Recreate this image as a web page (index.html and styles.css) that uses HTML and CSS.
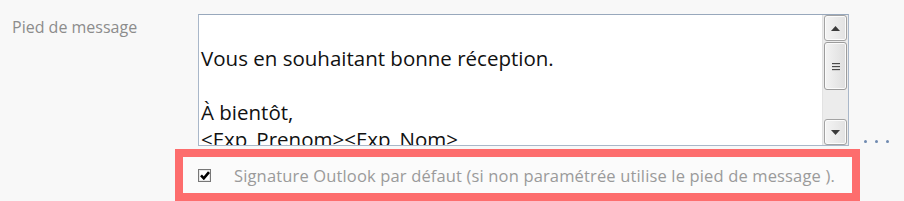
FILE: index.html
```
<!DOCTYPE html>
<html lang="fr">
<head>
    <meta charset="UTF-8">
    <meta name="viewport" content="width=device-width, initial-scale=1.0">
    <title>Pied de message</title>
    <link rel="stylesheet" href="styles.css">
</head>
<body>
    <div class="field-row">
        <div class="field-label">Pied de message</div>

        <div class="editor">
            <div class="editor-content">
                <div class="line">&nbsp;</div>
                <div class="line">Vous en souhaitant bonne réception.</div>
                <div class="line">&nbsp;</div>
                <div class="line">À bientôt,</div>
                <div class="line">&lt;Exp_Prenom&gt;&lt;Exp_Nom&gt;</div>
            </div>
            <div class="scrollbar">
                <div class="scroll-btn">
                    <svg width="9" height="5" viewBox="0 0 9 5"><path d="M4.5 0 L9 5 L0 5 Z" fill="#3a3a3a"/></svg>
                </div>
                <div class="scroll-thumb">
                    <span class="grip"></span>
                    <span class="grip"></span>
                    <span class="grip"></span>
                </div>
                <div class="scroll-track"></div>
                <div class="scroll-btn">
                    <svg width="9" height="5" viewBox="0 0 9 5"><path d="M0 0 L9 0 L4.5 5 Z" fill="#3a3a3a"/></svg>
                </div>
            </div>
        </div>

        <div class="more">
            <span class="dot"></span>
            <span class="dot"></span>
            <span class="dot"></span>
        </div>
    </div>

    <div class="option-box">
        <label class="option">
            <span class="checkbox">
                <svg width="10" height="9" viewBox="0 0 10 9"><path d="M1 4.3 L3.8 7.3 L9 1.2" fill="none" stroke="#000" stroke-width="2.6"/></svg>
            </span>
            <span class="option-text">Signature Outlook par défaut (si non paramétrée utilise le pied de message ).</span>
        </label>
    </div>
</body>
</html>
```

FILE: styles.css
```
:root {
    --page-bg: #f8f8f8;
    --label: #8c8c8c;
    --editor-border: #a9b7c9;
    --highlight: #fd6d6d;
    --font: 'Open Sans', 'Noto Sans', Arial, sans-serif;
}

body {
    background-color: var(--page-bg);
    font-family: var(--font);
    margin: 0;
    height: 201px;
    overflow: hidden;
}

.field-row {
    display: flex;
    align-items: flex-end;
    padding-top: 14px;
}

.field-label {
    align-self: flex-start;
    width: 186px;
    padding-left: 12px;
    padding-top: 2px;
    font-size: 16px;
    color: var(--label);
}

.editor {
    display: flex;
    width: 649px;
    height: 130px;
    background: #fff;
    border: 1px solid var(--editor-border);
    border-top-color: #98a8bc;
}

.editor-content {
    flex: 1;
    overflow: hidden;
    padding: 3px 0 0 2px;
    font-size: 20.5px;
    line-height: 27px;
    color: #111;
    white-space: nowrap;
}

.scrollbar {
    width: 25px;
    display: flex;
    flex-direction: column;
    background: #ececec;
    border-left: 1px solid #e2e2e2;
}

.scroll-btn {
    height: 24px;
    margin: 0 1px;
    display: flex;
    align-items: center;
    justify-content: center;
    background: linear-gradient(to right, #f4f4f4, #e2e2e2);
    border: 1px solid #a3a3a3;
    border-radius: 3px;
    box-shadow: inset 0 0 0 1px #fcfcfc;
}

.scroll-thumb {
    height: 46px;
    margin: 1px 1px 0;
    display: flex;
    flex-direction: column;
    align-items: center;
    justify-content: center;
    gap: 2px;
    background: linear-gradient(to right, #f3f3f3, #dedede);
    border: 1px solid #9c9c9c;
    border-radius: 3px;
    box-shadow: inset 0 0 0 1px #fbfbfb;
}

.grip {
    width: 8px;
    height: 1px;
    background: #4a4a4a;
    box-shadow: 0 1px 0 #cfcfcf;
}

.scroll-track {
    flex: 1;
}

.more {
    display: flex;
    gap: 8px;
    margin-left: 15px;
    margin-bottom: 3px;
}

.dot {
    width: 3px;
    height: 3px;
    border-radius: 50%;
    background: #6f8ab0;
}

.option-box {
    margin: 3px 0 0 175px;
    width: 669px;
    height: 36px;
    border: 8px solid var(--highlight);
    background: #fbfbfb;
}

.option {
    display: flex;
    align-items: center;
    height: 100%;
    padding-left: 15px;
}

.checkbox {
    width: 11px;
    height: 11px;
    border: 1px solid #777;
    background: #fff;
    display: flex;
    align-items: center;
    justify-content: center;
    box-shadow: inset 0 0 0 1px #e8e8e8;
}

.option-text {
    margin-left: 23px;
    font-size: 16.5px;
    letter-spacing: 0.15px;
    color: #9a9a9a;
}
```
